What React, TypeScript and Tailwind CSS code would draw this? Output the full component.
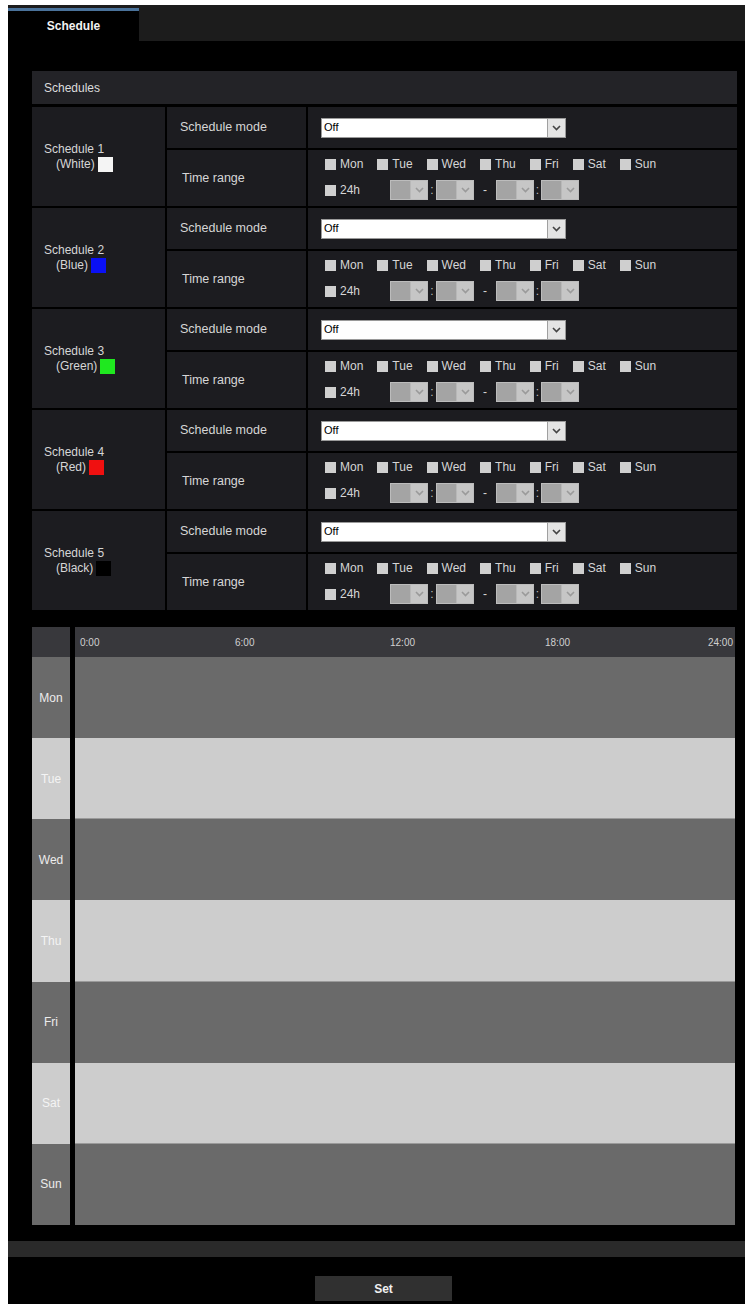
import React from "react";

const schedules = [
  { n: 1, name: "White", color: "#f4f4f4" },
  { n: 2, name: "Blue", color: "#0a10f5" },
  { n: 3, name: "Green", color: "#1fe81f" },
  { n: 4, name: "Red", color: "#f01010" },
  { n: 5, name: "Black", color: "#000000" },
];

const days = ["Mon", "Tue", "Wed", "Thu", "Fri", "Sat", "Sun"];

function Chevron({ color = "#555" }: { color?: string }) {
  return (
    <svg width="9" height="6" viewBox="0 0 9 6">
      <polyline points="1,1 4.5,4.5 8,1" fill="none" stroke={color} strokeWidth="1.6" />
    </svg>
  );
}

function SmallSelect() {
  return (
    <div className="flex h-[20px] w-[38px] border border-[#bcbcbc] bg-[#a4a4a4]">
      <div className="flex-1" />
      <div className="flex w-[17px] items-center justify-center border-l border-[#b8b8b8] bg-[#c6c6c6]">
        <Chevron color="#9a9a9a" />
      </div>
    </div>
  );
}

function Check() {
  return <div className="h-[11px] w-[11px] bg-[#cfcfcf]" />;
}

function ScheduleBlock({ n, name, color }: { n: number; name: string; color: string }) {
  return (
    <>
      <div className="row-span-2 flex items-center bg-[#1c1c20] pl-[12px] text-[12px] leading-[15px] text-[#d6d6d6]">
        <div>
          <div>Schedule {n}</div>
          <div className="ml-[12px] flex items-center">
            <span>({name})</span>
            <span className="ml-[3px] inline-block h-[15px] w-[15px]" style={{ backgroundColor: color }} />
          </div>
        </div>
      </div>
      <div className="flex h-[41px] items-center bg-[#1c1c20] pl-[13px] text-[12.5px] text-[#d6d6d6]">
        Schedule mode
      </div>
      <div className="flex h-[41px] items-center bg-[#1c1c20] pl-[13px]">
        <div className="flex h-[20px] w-[245px] border border-[#9a9a9a] bg-white">
          <div className="flex flex-1 items-center pl-[2px] text-[11px] text-black">Off</div>
          <div className="flex w-[18px] items-center justify-center border-l border-[#a0a0a0] bg-[#e4e4e4]">
            <Chevron color="#444" />
          </div>
        </div>
      </div>
      <div className="flex h-[56px] items-center bg-[#1c1c20] pl-[15px] text-[12.5px] text-[#d6d6d6]">
        Time range
      </div>
      <div className="h-[56px] bg-[#1c1c20] pl-[17px] pt-[7px] text-[12px] text-[#d6d6d6]">
        <div className="flex h-[14px] items-center gap-[14px]">
          {days.map((d) => (
            <div key={d} className="flex items-center gap-[4px]">
              <Check />
              <span>{d}</span>
            </div>
          ))}
        </div>
        <div className="mt-[9px] flex h-[20px] items-center">
          <div className="flex w-[65px] items-center gap-[4px]">
            <Check />
            <span>24h</span>
          </div>
          <SmallSelect />
          <div className="w-[8px] text-center leading-none text-[#bbb]">:</div>
          <SmallSelect />
          <div className="w-[22px] text-center text-[#d6d6d6]">-</div>
          <SmallSelect />
          <div className="w-[7px] text-center leading-none text-[#bbb]">:</div>
          <SmallSelect />
        </div>
      </div>
    </>
  );
}

export default function App() {
  return (
    <div className="min-h-[1304px] bg-white pl-[8px] pt-[5px] font-['Liberation_Sans',Arial,sans-serif]">
      <div className="min-h-[1299px] bg-black pb-[4px]">
        {/* tab bar */}
        <div className="h-[36px] bg-[#1c1c1c] pt-[3px]">
          <div className="flex h-[33px] w-[131px] items-center justify-center border-t-[3px] border-[#4a729a] bg-black text-[12px] font-bold text-[#f2f2f2]">
            Schedule
          </div>
        </div>

        {/* schedules panel */}
        <div className="ml-[24px] mr-[8px] mt-[30px]">
          <div className="flex h-[33px] items-center bg-[#232327] pl-[12px] text-[12px] text-[#dcdcdc]">
            Schedules
          </div>
          <div className="mt-[3px] grid grid-cols-[133px_139px_1fr] gap-[2px] bg-black">
            {schedules.map((s) => (
              <ScheduleBlock key={s.n} {...s} />
            ))}
          </div>
        </div>

        {/* chart */}
        <div className="ml-[24px] mr-[10px] mt-[17px] flex">
          <div className="flex w-[38px] flex-col">
            <div className="h-[30px] bg-[#38383c]" />
            <div className="flex h-[568px] flex-col">
              {days.map((d, i) => (
                <div
                  key={d}
                  className={
                    "flex flex-1 items-center justify-center text-[12px] " +
                    (i % 2 === 0 ? "bg-[#6a6a6a] text-[#ececec]" : "bg-[#cdcdcd] text-[#f4f4f4]")
                  }
                >
                  {d}
                </div>
              ))}
            </div>
          </div>
          <div className="w-[5px] bg-black" />
          <div className="flex flex-1 flex-col">
            <div className="flex h-[30px] items-center bg-[#38383c] pl-[5px] text-[10px] text-[#d0d0d0]">
              <div className="w-[155px]">0:00</div>
              <div className="w-[155px]">6:00</div>
              <div className="w-[155px]">12:00</div>
              <div className="w-[155px]">18:00</div>
              <div className="flex-1 pr-[2px] text-right">24:00</div>
            </div>
            <div className="flex h-[568px] flex-col">
              {days.map((d, i) => (
                <div
                  key={d}
                  className={"flex-1 " + (i % 2 === 0 ? "bg-[#6a6a6a]" : "bg-[#cdcdcd] border-b border-[#9a9a9a]")}
                />
              ))}
            </div>
          </div>
        </div>

        <div className="mt-[16px] h-[16px] bg-[#2a2a2a]" />

        <div className="ml-[307px] mt-[19px] flex h-[25px] w-[137px] items-center justify-center bg-[#303030] text-[12px] font-bold text-[#f0f0f0]">
          Set
        </div>
      </div>
    </div>
  );
}
